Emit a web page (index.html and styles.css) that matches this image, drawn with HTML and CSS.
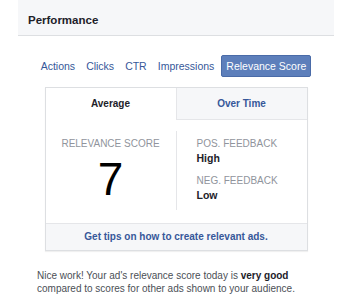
FILE: index.html
```html
<!DOCTYPE html>
<html lang="en">
<head>
<meta charset="UTF-8">
<title>Performance</title>
<link rel="stylesheet" href="styles.css">
</head>
<body>
<div class="panel">
    <div class="panel-head">Performance</div>
    <div class="metric-tabs">
        <a class="metric">Actions</a>
        <a class="metric">Clicks</a>
        <a class="metric">CTR</a>
        <a class="metric">Impressions</a>
        <a class="metric active">Relevance Score</a>
    </div>
    <div class="card">
        <div class="card-tabs">
            <div class="card-tab selected">Average</div>
            <div class="card-tab">Over Time</div>
        </div>
        <div class="card-body">
            <div class="score">
                <div class="label">RELEVANCE SCORE</div>
                <div class="big">7</div>
            </div>
            <div class="feedback">
                <div class="label">POS. FEEDBACK</div>
                <div class="value">High</div>
                <div class="label second">NEG. FEEDBACK</div>
                <div class="value">Low</div>
            </div>
        </div>
        <div class="card-foot">Get tips on how to create relevant ads.</div>
    </div>
    <p class="note">Nice work! Your ad's relevance score today is <b>very good</b> compared to scores for other ads shown to your audience.</p>
</div>
</body>
</html>
```
FILE: styles.css
```css
* { margin:0; padding:0; box-sizing:border-box; }
body {
    font-family: 'Liberation Sans', Arial, sans-serif;
    background: #fff;
    color: #1d2129;
}
.panel {
    width: 316px;
    margin-left: 18px;
}
.panel-head {
    height: 36px;
    padding: 6px 0 0 10px;
    line-height: 29px;
    font-size: 11.5px;
    font-weight: bold;
    background: #f6f7f9;
    border-bottom: 1px solid #dddfe2;
}
.metric-tabs {
    display: flex;
    justify-content: center;
    align-items: center;
    gap: 11px;
    margin-top: 19px;
    height: 22px;
}
.metric {
    color: #365899;
    font-size: 10.5px;
}
.metric.active {
    color: #fff;
    background: #5d7fbb;
    border: 1px solid #4a6ba8;
    border-radius: 2px;
    padding: 0 4px;
    line-height: 20px;
    margin-left: -4px;
}
.card {
    width: 263px;
    margin: 10px auto 0;
    border: 1px solid #dddfe2;
    box-shadow: 0 1px 1px rgba(0,0,0,0.06);
}
.card-tabs {
    display: flex;
    height: 32px;
}
.card-tab {
    flex: 1;
    display: flex;
    justify-content: center;
    align-items: center;
    font-size: 10px;
    font-weight: bold;
    color: #365899;
    background: #f6f7f9;
    border-bottom: 1px solid #e5e6e9;
    border-left: 1px solid #e5e6e9;
}
.card-tab.selected {
    color: #1d2129;
    background: #fff;
    border-bottom-color: #fff;
    border-left: none;
}
.card-body {
    display: flex;
    height: 103px;
    padding: 11px 0 13px;
}
.label {
    font-size: 10px;
    color: #90949c;
    line-height: 13px;
}
.score {
    width: 131px;
    border-right: 1px solid #e5e6e9;
    text-align: center;
    padding-top: 6px;
}
.big {
    font-size: 46px;
    line-height: 46px;
    margin-top: 6px;
    color: #000;
}
.feedback {
    padding: 6px 0 0 20px;
}
.value {
    font-size: 10.5px;
    font-weight: bold;
    line-height: 16px;
}
.label.second {
    margin-top: 8px;
}
.card-foot {
    height: 27px;
    line-height: 26px;
    text-align: center;
    font-size: 10px;
    font-weight: bold;
    color: #365899;
    background: #f6f7f9;
    border-top: 1px solid #e5e6e9;
}
.note {
    margin: 18px 0 0 19px;
    font-size: 10px;
    line-height: 13px;
    color: #4b4f56;
}
.note b { color: #1d2129; }
```
